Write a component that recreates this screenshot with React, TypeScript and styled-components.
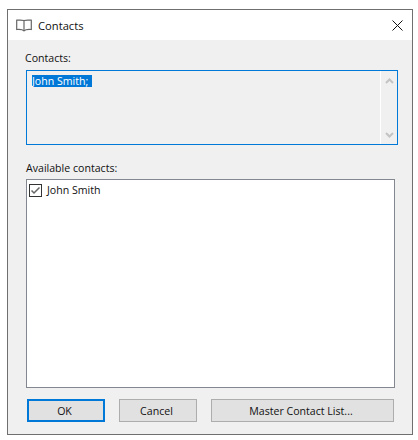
import React from 'react';
import styled, { createGlobalStyle } from 'styled-components';

const GlobalStyle = createGlobalStyle`
  html, body {
    margin: 0;
    padding: 0;
    background: #ffffff;
  }
`;

const Page = styled.div`
  width: 418px;
  height: 440px;
  padding: 9px 5px 5px 7px;
  box-sizing: border-box;
`;

const Dialog = styled.div`
  display: flex;
  flex-direction: column;
  height: 100%;
  box-sizing: border-box;
  border: 1px solid #6f6f6f;
  background: #f0f0f0;
  font-family: "Open Sans", "Noto Sans", sans-serif;
  font-size: 10.6px;
  color: #111111;
`;

const TitleBar = styled.div`
  display: flex;
  align-items: center;
  height: 30px;
  flex-shrink: 0;
  padding: 0 9px 0 8px;
  gap: 6px;
  background: #ffffff;
`;

const Title = styled.span`
  flex: 1;
  font-size: 11.2px;
`;

const Content = styled.div`
  display: flex;
  flex-direction: column;
  flex: 1;
  padding: 9px 14px 12px 18px;
`;

const Label = styled.div`
  height: 20px;
  line-height: 18px;
`;

const ContactsLabel = styled(Label)`
  height: 21px;
  margin-left: -1px;
`;

const ContactsBox = styled.div`
  display: flex;
  justify-content: space-between;
  box-sizing: border-box;
  height: 75px;
  border: 1px solid #0078d7;
  background: #f0f0f0;
`;

const Selected = styled.span`
  align-self: flex-start;
  margin: 4px 0 0 5px;
  padding-right: 4px;
  line-height: 12px;
  background: #0078d7;
  color: #ffffff;
`;

const ScrollTrack = styled.div`
  display: flex;
  flex-direction: column;
  justify-content: space-between;
  align-items: center;
  box-sizing: border-box;
  width: 17px;
  padding: 7px 0 6px;
  border-left: 1px solid #ffffff;
`;

const AvailableLabel = styled(Label)`
  margin-top: 14px;
`;

const ContactList = styled.div`
  flex: 1;
  margin-right: 3px;
  padding: 2px 2px;
  border: 1px solid #828790;
  background: #ffffff;
`;

const ContactRow = styled.label`
  display: flex;
  align-items: center;
  gap: 5px;
  height: 16px;
`;

const CheckBox = styled.span`
  display: flex;
  align-items: center;
  justify-content: center;
  box-sizing: border-box;
  width: 13px;
  height: 13px;
  border: 1px solid #333333;
`;

const Buttons = styled.div`
  display: flex;
  gap: 14px;
  margin: 11px 4px 0 1px;
`;

const Button = styled.button<{ $primary?: boolean; $grow?: boolean }>`
  box-sizing: border-box;
  width: ${(p) => (p.$grow ? 'auto' : '78px')};
  flex: ${(p) => (p.$grow ? 1 : 'none')};
  height: 23px;
  padding: 0 3px 0 0;
  border: ${(p) => (p.$primary ? '2px solid #0078d7' : '1px solid #adadad')};
  background: #e1e1e1;
  font: inherit;
  color: #111111;
`;

const App = () => (
  <Page>
    <GlobalStyle />
    <Dialog>
      <TitleBar>
        <svg width="16" height="13" viewBox="0 0 16 13" fill="none" stroke="#666666" strokeWidth="1.2">
          <path d="M8 1.500C6.500 1 3 1 .7 1.200v9.300C3 10.300 6.500 10.300 8 11.800c1.500-1.500 5-1.500 7.300-1.300V1.200C13 1 9.500 1 8 1.500z" />
          <path d="M8 1.500v10.300" />
        </svg>
        <Title>Contacts</Title>
        <svg width="11" height="11" viewBox="0 0 11 11" stroke="#111111" strokeWidth="1">
          <path d="M.5.5l10 10M10.500.5l-10 10" />
        </svg>
      </TitleBar>
      <Content>
        <ContactsLabel>Contacts:</ContactsLabel>
        <ContactsBox>
          <Selected>John Smith;</Selected>
          <ScrollTrack>
            <svg width="9" height="6" viewBox="0 0 9 6" fill="none" stroke="#c4c4c4" strokeWidth="2">
              <path d="M1 5l3.500-3.500L8 5" />
            </svg>
            <svg width="9" height="6" viewBox="0 0 9 6" fill="none" stroke="#c4c4c4" strokeWidth="2">
              <path d="M1 1l3.500 3.500L8 1" />
            </svg>
          </ScrollTrack>
        </ContactsBox>
        <AvailableLabel>Available contacts:</AvailableLabel>
        <ContactList>
          <ContactRow>
            <CheckBox>
              <svg width="11" height="11" viewBox="0 0 11 11" fill="none" stroke="#666666" strokeWidth="1.5">
                <path d="M1.500 5.500l2.500 2.500L9.500 2.500" />
              </svg>
            </CheckBox>
            John Smith
          </ContactRow>
        </ContactList>
        <Buttons>
          <Button $primary>OK</Button>
          <Button>Cancel</Button>
          <Button $grow>Master Contact List...</Button>
        </Buttons>
      </Content>
    </Dialog>
  </Page>
);

export default App;
